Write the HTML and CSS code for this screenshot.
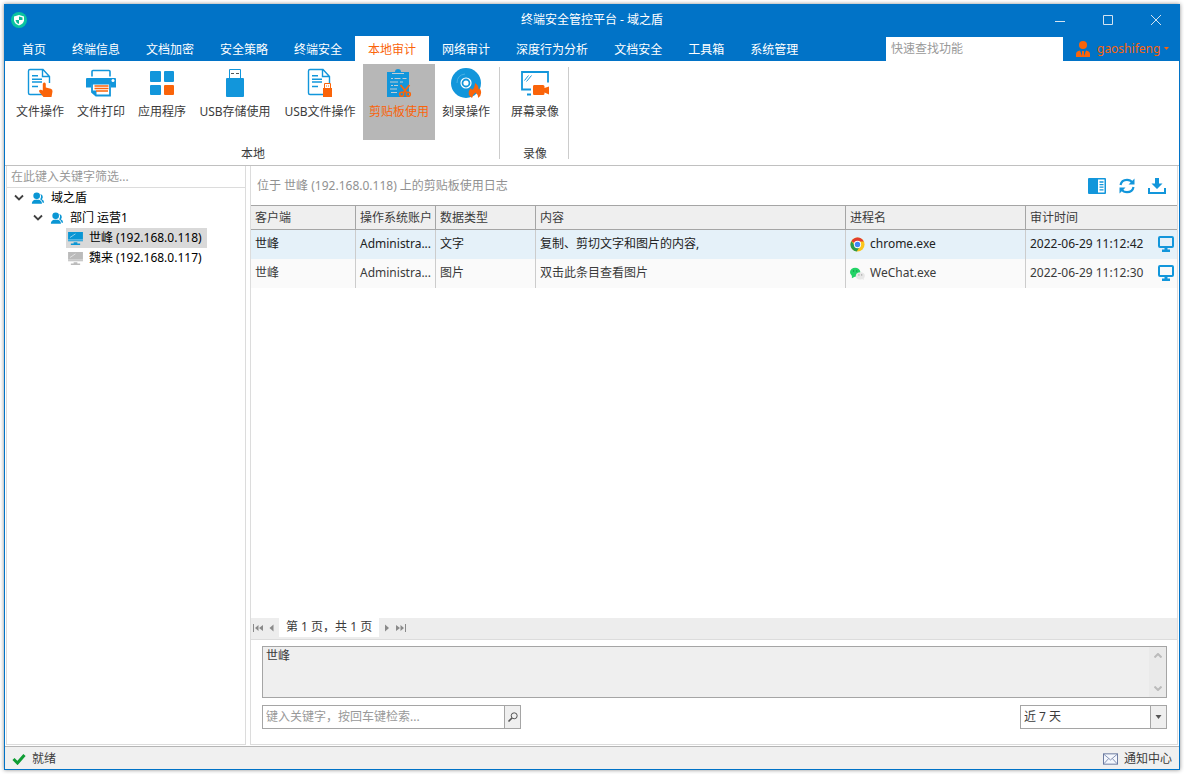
FILE: index.html
```html
<!DOCTYPE html>
<html lang="zh-CN">
<head>
<meta charset="utf-8">
<title>终端安全管控平台 - 域之盾</title>
<link rel="stylesheet" href="styles.css">
</head>
<body>
<svg class="defs" aria-hidden="true">
  <symbol id="doc" viewBox="0 0 32 32"><path d="M25.500 16V9.500L19 2.500H6Q4.500 2.500 4.500 4V26Q4.500 27.500 6 27.500H19M18.500 2.500V9.500H25.500" fill="none" stroke="#1296db" stroke-width="1.400"/><path d="M8 8.800h6M8 12.300h10M8 15h10M8 19.500h6" stroke="#1296db" stroke-width="1.600"/></symbol>
  <symbol id="people" viewBox="0 0 16 16"><g fill="#0a96d4"><circle cx="6.500" cy="5.500" r="3.800"/><path d="M1 14.500q0-3.500 3.500-4.500h4.500q3.500 1 3.500 4.500z"/><path d="M10.500 3.500q3 .5 3 3.300 0 1.700-1.200 2.700 2.700 1 2.700 4h-1.600q-.4-2.800-3-4 1.100-1.500 1.100-3.200 0-1.500-1-2.800z"/></g></symbol>
  <symbol id="pc" viewBox="0 0 16 14"><path d="M0 0h16v10H0zM6 11h4v1.500H6zM3 12.500h10V14H3z" fill="currentColor"/><path d="M0 8.500h16M2 6l6-4" stroke="#fff" stroke-width=".7" opacity=".8"/></symbol>
  <symbol id="monitor" viewBox="0 0 16 16"><rect x="1" y="1" width="14" height="10" rx="1" fill="none" stroke="#1296db" stroke-width="2"/><path d="M6.500 11h3v2.500h2.500V16H4v-2.500h2.500z" fill="#1296db"/></symbol>
  <symbol id="chev" viewBox="0 0 10 10"><path d="M1 2.500L5 6.500 9 2.500" fill="none" stroke="#404040" stroke-width="1.800"/></symbol>
</svg>
<div class="window">
  <header class="header">
    <div class="titlebar">
      <svg class="logo" viewBox="0 0 16 16"><circle cx="8" cy="8" r="8" fill="#0bc3a0"/><path d="M8 3l5 1.500v4Q12.500 11.800 8 13.500 3.500 11.800 3 8.500v-4z" fill="#fff"/><path d="M8 4.500l3.500 1V8H8zM4.500 8H8v4Q5 11 4.500 8z" fill="#0bb997"/></svg>
      <h1 class="title">终端安全管控平台 - 域之盾</h1>
      <div class="controls">
        <button class="ctl" aria-label="最小化"><svg viewBox="0 0 10 10"><path d="M0 6.500h10"/></svg></button>
        <button class="ctl" aria-label="最大化"><svg viewBox="0 0 10 10"><path d="M.5.5h9v9h-9z"/></svg></button>
        <button class="ctl" aria-label="关闭"><svg viewBox="0 0 10 10"><path d="M0 0l10 10M10 0L0 10"/></svg></button>
      </div>
    </div>
    <div class="menubar">
      <nav class="tabs">
        <button class="tab">首页</button><button class="tab">终端信息</button><button class="tab">文档加密</button><button class="tab">安全策略</button><button class="tab">终端安全</button><button class="tab active">本地审计</button><button class="tab">网络审计</button><button class="tab">深度行为分析</button><button class="tab">文档安全</button><button class="tab">工具箱</button><button class="tab">系统管理</button>
      </nav>
      <input class="quick" type="text" placeholder="快速查找功能" aria-label="快速查找功能">
      <button class="user">
        <svg class="avatar" viewBox="0 0 14 16"><circle cx="7" cy="4" r="4"/><path d="M0 16v-3q0-3 4-3.500l2 5.500V10h2v5l2-5.500q4 .5 4 3.500v3z"/></svg>
        <span>gaoshifeng</span>
        <svg class="drop" viewBox="0 0 5 3"><path d="M0 0h5L2.500 3z"/></svg>
      </button>
    </div>
  </header>

  <section class="ribbon">
    <div class="group">
      <div class="items">
        <button class="item"><svg viewBox="0 0 32 32"><use href="#doc"/><path d="M19.500 30l-4.200-5q-.8-2.500 1.700-2.300l1.800.8v-6.700q1.500-2.400 3 0v3.700l5 1.200q1.900.6 1.700 2.800l-1 5.500z" fill="#fa640a"/></svg><span>文件操作</span></button>
        <button class="item"><svg viewBox="0 0 32 32"><path d="M7 9.500V4.500q0-1 1-1h16q1 0 1 1V9.500" fill="none" stroke="#1296db" stroke-width="1.600"/><path d="M2 11h28q1 0 1 1v8.500h-5V17H6v3.500H1V12q0-1 1-1z" fill="#1296db"/><circle cx="28" cy="13.500" r="1.500" fill="#fff"/><path d="M7 17v8l4 3.500h14V17" fill="#fff" stroke="#1296db" stroke-width="1.800"/><path d="M6 17h20M7 24h4v5z" stroke="#1296db" fill="#1296db"/><path d="M9.500 19h14M9.500 21.500h14M11 24h12" stroke="#fa640a" stroke-width="1.300"/></svg><span>文件打印</span></button>
        <button class="item"><svg viewBox="0 0 32 32"><g fill="#1296db"><rect x="4" y="4" width="11" height="11" rx="1"/><rect x="18" y="4" width="10" height="11" rx="1"/><rect x="4" y="18" width="11" height="10" rx="1"/></g><rect x="18" y="18" width="10" height="10" rx="1" fill="#fa640a"/></svg><span>应用程序</span></button>
        <button class="item wide"><svg viewBox="0 0 32 32"><path d="M10.500 12V2.500h11V12" fill="none" stroke="#1296db"/><path d="M12 6.500h3M17 6.500h3" stroke="#555"/><rect x="7" y="11" width="18" height="19" rx="1" fill="#1296db"/></svg><span>USB存储使用</span></button>
        <button class="item wide"><svg viewBox="0 0 32 32"><use href="#doc"/><path d="M20.500 21v-4.500h6V21" fill="#fff" stroke="#fa640a"/><path d="M22 19h1M24 19h1" stroke="#fa640a"/><rect x="19" y="21" width="9" height="9" fill="#fa640a"/></svg><span>USB文件操作</span></button>
        <button class="item selected"><svg viewBox="0 0 32 32"><path d="M4 5h8q0-3 3-3t3 3h8v25H4z" fill="#1296db"/><path d="M9 6.500h12M8 11.500h2M11.500 11.500h6M19.500 11.500h4M7 15h8M17 15h3M8 18.500h2M11 18.500h4M7 22h7M8 25.500h6" stroke="#c2cdd4"/><path d="M17.500 18l6.500 8M26.500 18L20 26" stroke="#fa640a" stroke-width="1.800"/><g fill="none" stroke="#fa640a" stroke-width="1.600"><circle cx="18.700" cy="27.300" r="2"/><circle cx="25.300" cy="27.300" r="2"/></g></svg><span>剪贴板使用</span></button>
        <button class="item"><svg viewBox="0 0 32 32"><circle cx="16" cy="16" r="15" fill="#1296db"/><circle cx="16" cy="16" r="5" fill="none" stroke="#fff" stroke-width="1.200"/><circle cx="16" cy="16" r="2.600" fill="#fff"/><path d="M7 16q0-8 8-9" stroke="#49b1e6" fill="none"/><path d="M22 31q-5-3-2.500-8l1.500-2 1 2q3-2.500 3-7 4 2.500 3.500 6.500l1.500-1q3 6-2 9.500 .5-3-2.500-5.500-3 2.500-3.500 5.500z" fill="#fa640a"/></svg><span>刻录操作</span></button>
      </div>
      <div class="caption">本地</div>
    </div>
    <div class="group">
      <div class="items">
        <button class="item"><svg viewBox="0 0 32 32"><path d="M12 22.500H3V5h26v10.500" fill="none" stroke="#1296db" stroke-width="1.800"/><path d="M5.500 13.500l4-5M7.500 14.500l5-6" stroke="#1296db"/><path d="M8 27.500h4" stroke="#1296db" stroke-width="2"/><path d="M15 18h9q1.500 0 1.500 1.500v1.500l4.500-1.500v8l-4.500-2v1q0 1.500-1.500 1.500h-9q-1 0-1-1.500v-7q0-1.500 1-1.500z" fill="#fa640a"/></svg><span>屏幕录像</span></button>
      </div>
      <div class="caption">录像</div>
    </div>
  </section>

  <main class="workspace">
    <aside class="sidebar">
      <input class="filter" type="text" placeholder="在此键入关键字筛选..." aria-label="在此键入关键字筛选">
      <ul class="tree">
        <li class="node"><svg class="chev"><use href="#chev"/></svg><svg class="ico"><use href="#people"/></svg><span>域之盾</span></li>
        <li class="node level2"><svg class="chev"><use href="#chev"/></svg><svg class="ico"><use href="#people"/></svg><span>部门 运营1</span></li>
        <li class="node level3"><span class="leaf current"><svg class="pc"><use href="#pc"/></svg><span>世峰 (192.168.0.118)</span></span></li>
        <li class="node level3"><span class="leaf offline"><svg class="pc"><use href="#pc"/></svg><span>魏来 (192.168.0.117)</span></span></li>
      </ul>
    </aside>
    <section class="content">
      <div class="toolbar">
        <p class="where">位于 世峰 (192.168.0.118) 上的剪贴板使用日志</p>
        <div class="tools">
          <button aria-label="详情"><svg viewBox="0 0 18 16"><rect width="18" height="16" rx="1" fill="#1296db"/><path d="M10 1.500h6.500v13H10z" fill="#fff"/><path d="M11.500 4h4M11.500 6.600h4M11.500 9.200h4M11.500 11.800h4" stroke="#1296db" stroke-width="1.300"/></svg></button>
          <button aria-label="刷新"><svg viewBox="0 0 18 16"><path d="M2.500 7Q3.500 1.800 9 1.800q3.500 0 5.200 2.700M15.500 9q-1 5.200-6.500 5.200-3.500 0-5.200-2.700" fill="none" stroke="#1296db" stroke-width="2.200"/><path d="M16.500.5v6h-6zM1.500 15.500v-6h6z" fill="#1296db"/></svg></button>
          <button aria-label="下载"><svg viewBox="0 0 18 16"><path d="M7 0h4v5.500h3.500L9 11 3.500 5.500H7z" fill="#1296db"/><path d="M1 10v5h16v-5" fill="none" stroke="#1296db" stroke-width="2"/></svg></button>
        </div>
      </div>
      <div class="grid">
        <table class="log">
          <colgroup><col class="c-client"><col class="c-account"><col class="c-type"><col><col class="c-proc"><col class="c-time"></colgroup>
          <thead><tr><th>客户端</th><th>操作系统账户</th><th>数据类型</th><th>内容</th><th>进程名</th><th>审计时间</th></tr></thead>
          <tbody>
            <tr class="picked"><td>世峰</td><td>Administra...</td><td>文字</td><td>复制、剪切文字和图片的内容,</td>
              <td><span class="proc"><svg viewBox="0 0 16 16"><circle cx="8" cy="8" r="7.500" fill="#fbc51b"/><path d="M8 8L1.400 4.400Q4 .5 8 .5q4.500 0 6.700 4.200H8z" fill="#e13d30"/><path d="M1.400 4.400Q-.7 8.500 2 12.500q2 2.600 5.200 3L10.500 10 8 8H4.500z" fill="#2c9b4b"/><circle cx="8" cy="8" r="3.900" fill="#fff"/><circle cx="8" cy="8" r="2.900" fill="#4285f4"/></svg>chrome.exe</span></td>
              <td><span class="time">2022-06-29 11:12:42<svg><use href="#monitor"/></svg></span></td></tr>
            <tr><td>世峰</td><td>Administra...</td><td>图片</td><td>双击此条目查看图片</td>
              <td><span class="proc"><svg viewBox="0 0 16 16"><ellipse cx="5.500" cy="6.500" rx="5.500" ry="4.700" fill="#22d366"/><path d="M2 9v4l4-2z" fill="#22d366"/><ellipse cx="11" cy="10.500" rx="4.800" ry="3.900" fill="#e7e7e7"/><path d="M12 13l3 2-1-3z" fill="#e7e7e7"/><g fill="#188a45"><circle cx="3.800" cy="5.300" r=".7"/><circle cx="7.200" cy="5.300" r=".7"/></g><g fill="#888"><circle cx="9.500" cy="9.500" r=".6"/><circle cx="12.500" cy="9.500" r=".6"/></g></svg>WeChat.exe</span></td>
              <td><span class="time">2022-06-29 11:12:30<svg><use href="#monitor"/></svg></span></td></tr>
          </tbody>
        </table>
      </div>
      <div class="pager">
        <button aria-label="第一页"><svg viewBox="0 0 10 8"><path d="M0 0h1v8H0zM5.500 1v6L2 4zM10 1v6L6 4z"/></svg></button>
        <button aria-label="上一页"><svg viewBox="0 0 10 8"><path d="M6.500 .5v7L2.500 4z"/></svg></button>
        <span class="page">第 1 页，共 1 页</span>
        <button aria-label="下一页"><svg viewBox="0 0 10 8"><path d="M3 .5v7L7 4z"/></svg></button>
        <button aria-label="最后一页"><svg viewBox="0 0 10 8"><path d="M9 0h1v8H9zM4.500 1v6L8 4zM0 1v6l4-3z"/></svg></button>
      </div>
      <div class="details">
        <div class="memo">
          <textarea readonly aria-label="内容">世峰</textarea>
          <div class="scroll"><svg viewBox="0 0 8 5"><path d="M.5 4.500L4 1l3.500 3.500"/></svg><svg viewBox="0 0 8 5"><path d="M.5.5L4 4 7.500.5"/></svg></div>
        </div>
        <div class="query">
          <div class="search"><input type="text" placeholder="键入关键字，按回车键检索..." aria-label="键入关键字，按回车键检索"><button aria-label="检索"><svg viewBox="0 0 10 10"><circle cx="6.200" cy="3.800" r="3"/><path d="M4 6L.5 9.500" stroke-width="1.600"/></svg></button></div>
          <div class="range"><select aria-label="时间范围"><option>近 7 天</option></select><span class="arrow"><svg viewBox="0 0 6 4"><path d="M0 0h6L3 4z"/></svg></span></div>
        </div>
      </div>
    </section>
  </main>

  <footer class="status">
    <span class="ready"><svg viewBox="0 0 14 12"><path d="M1.500 6l4 4 7-8" fill="none" stroke="#0f9d35" stroke-width="3"/></svg>就绪</span>
    <button class="notice"><svg viewBox="0 0 16 12"><rect x=".5" y=".5" width="15" height="11" fill="#f4f7fd" stroke="#65759d"/><path d="M1 1l7 6 7-6M1 11l5-5.500M15 11l-5-5.500" fill="none" stroke="#65759d" stroke-width=".8"/></svg>通知中心</button>
  </footer>
</div>
</body>
</html>
```
FILE: styles.css
```css
* { box-sizing: border-box; }
body {
  margin: 0;
  padding: 4px;
  background: #fff;
  color: #3b3b3b;
  font: 12px/18px "Noto Sans", "Noto Sans CJK SC", sans-serif;
}
button, input, select, textarea {
  margin: 0;
  padding: 0;
  border: 0;
  border-radius: 0;
  outline: 0;
  background: none;
  color: inherit;
  font: inherit;
}
svg { display: block; flex: none; }
.defs { display: none; }
.window {
  display: flex;
  flex-direction: column;
  min-height: calc(100vh - 8px);
  border: 1px solid #0173c7;
  background: #fff;
  box-shadow: 0 0 4px rgba(0, 0, 0, .45);
}

.header { background: #0173c7; color: #fff; }
.titlebar {
  display: grid;
  grid-template-columns: 1fr auto 1fr;
  align-items: center;
  height: 31px;
  padding: 0 0 2px 6px;
}
.logo { width: 16px; height: 16px; }
.title { margin: 0; padding-right: 6px; font-size: 12px; font-weight: 400; }
.controls { display: flex; justify-content: flex-end; margin-right: -1px; }
.ctl { display: grid; place-items: center; width: 48px; height: 28px; }
.ctl svg { width: 10px; height: 10px; fill: none; stroke: #d3e3f0; overflow: visible; }
.menubar { display: flex; height: 25px; padding-left: 4px; }
.tabs { display: flex; flex: 1; }
.tab { padding: 3px 13px 0; white-space: nowrap; }
.tab.active { background: #fff; color: #fa640a; }
.quick { width: 177px; height: 24px; margin-top: 1px; padding: 0 5px 1px; background: #fff; color: #333; }
::placeholder { color: #999; opacity: 1; }
.user { display: flex; align-items: center; width: 116px; padding-left: 13px; gap: 7px; color: #fa640a; }
.user svg { fill: #fa640a; }
.user .avatar { width: 14px; height: 16px; }
.drop { width: 5px; height: 3px; margin-left: -3px; }

.ribbon { display: flex; height: 105px; padding-top: 3px; border-bottom: 1px solid #c0c0c0; }
.group { position: relative; padding: 0 4px 0 5px; }
.group::after {
  content: "";
  position: absolute;
  top: 3px;
  right: 0;
  width: 1px;
  height: 92px;
  background: #ccc;
}
.items { display: flex; gap: 1px; }
.item {
  display: flex;
  flex-direction: column;
  align-items: center;
  gap: 4px;
  height: 76px;
  padding: 3px 6px 0;
  white-space: nowrap;
}
.item svg { width: 32px; height: 32px; }
.item.wide { width: 84px; }
.item.selected { background: #b7b7b7; color: #fa640a; }
.caption { padding-top: 5px; text-align: center; }

.workspace { display: flex; flex: 1; gap: 4px; padding: 0 1px 1px; background: #fff; }
.sidebar { width: 240px; border: 1px solid #dcdcdc; border-top: 0; }
.filter { display: block; width: 100%; height: 22px; padding: 0 4px; border-bottom: 1px solid #dcdcdc; }
.tree { margin: 0; padding: 0; list-style: none; color: #000; }
.node { display: flex; align-items: center; height: 20px; padding-left: 7px; }
.level2 { padding-left: 26px; }
.level3 { padding-left: 59px; }
.chev { width: 10px; height: 10px; margin-right: 6px; }
.ico { width: 16px; height: 14px; margin-right: 5px; }
.leaf { display: flex; align-items: center; gap: 6px; height: 20px; padding: 0 5px 0 2px; color: #000; }
.current { background: #d9d9d9; }
.pc { width: 15px; height: 13px; color: #0a96d4; }
.offline .pc { color: #bbb; }

.content { display: flex; flex: 1; flex-direction: column; min-width: 0; border: 1px solid #dcdcdc; border-top: 0; }
.toolbar { display: flex; align-items: center; justify-content: space-between; height: 39px; padding: 0 11px 0 6px; }
.where { margin: 0; color: #919191; }
.tools { display: flex; gap: 12px; }
.tools svg { width: 18px; height: 16px; }
.grid { flex: 1; }
.log { width: 100%; border-collapse: separate; border-spacing: 0; table-layout: fixed; }
.c-client { width: 105px; }
.c-account { width: 80px; }
.c-type { width: 100px; }
.c-proc { width: 180px; }
.c-time { width: 151px; }
.log th, .log td { padding: 0 4px; border-right: 1px solid #ccc; text-align: left; font-weight: 400; white-space: nowrap; }
.log th { height: 25px; border-top: 1px solid #a5a5a5; border-bottom: 1px solid #a5a5a5; border-right-color: #a5a5a5; background: #efefef; }
.log td { height: 29px; padding-bottom: 1px; background: #fafafa; }
.log .picked td { background: #e5f1f9; color: #222; }
.log th:last-child, .log td:last-child { padding-right: 3px; border-right: 0; }
.proc { display: flex; align-items: center; gap: 5px; }
.proc svg { width: 15px; height: 15px; }
.time { display: flex; align-items: center; justify-content: space-between; }
.time svg { width: 16px; height: 16px; }

.pager { display: flex; align-items: center; height: 22px; padding-bottom: 2px; border-bottom: 1px solid #dcdcdc; background: #ededed; }
.pager button { display: grid; place-items: center; width: 14px; height: 18px; }
.pager svg { width: 10px; height: 8px; fill: #8a8a8a; }
.page { height: 19px; margin-right: 1px; padding: 0 7px; background: #fff; }
.details { display: flex; flex-direction: column; gap: 7px; padding: 6px 10px 15px 11px; }
.memo { display: flex; height: 52px; border: 1px solid #a5a5a5; background: #efefef; }
.memo textarea { flex: 1; padding: 0 3px; resize: none; }
.scroll { display: flex; flex-direction: column; align-items: center; justify-content: space-between; width: 17px; padding: 6px 0; background: #eaeaea; }
.scroll svg { width: 8px; height: 5px; fill: none; stroke: #bbb; stroke-width: 2; }
.query { display: flex; justify-content: space-between; }
.search, .range { display: flex; height: 24px; border: 1px solid #a5a5a5; }
.search { width: 259px; }
.range { width: 147px; }
.search input, .range select { flex: 1; min-width: 0; padding: 0 3px; }
.range select { appearance: none; }
.search button, .arrow { display: grid; place-items: center; width: 16px; border-left: 1px solid #a5a5a5; background: #efefef; }
.search svg { width: 10px; height: 10px; fill: none; stroke: #555; overflow: visible; }
.arrow svg { width: 7px; height: 4px; fill: #555; }

.status { display: flex; align-items: center; justify-content: space-between; height: 23px; padding: 1px 7px 0; border-top: 1px solid #b5b5b5; background: #f0f0f0; }
.ready, .notice { display: flex; align-items: center; gap: 6px; }
.ready svg { width: 14px; height: 12px; }
.notice svg { width: 15px; height: 12px; }
```
